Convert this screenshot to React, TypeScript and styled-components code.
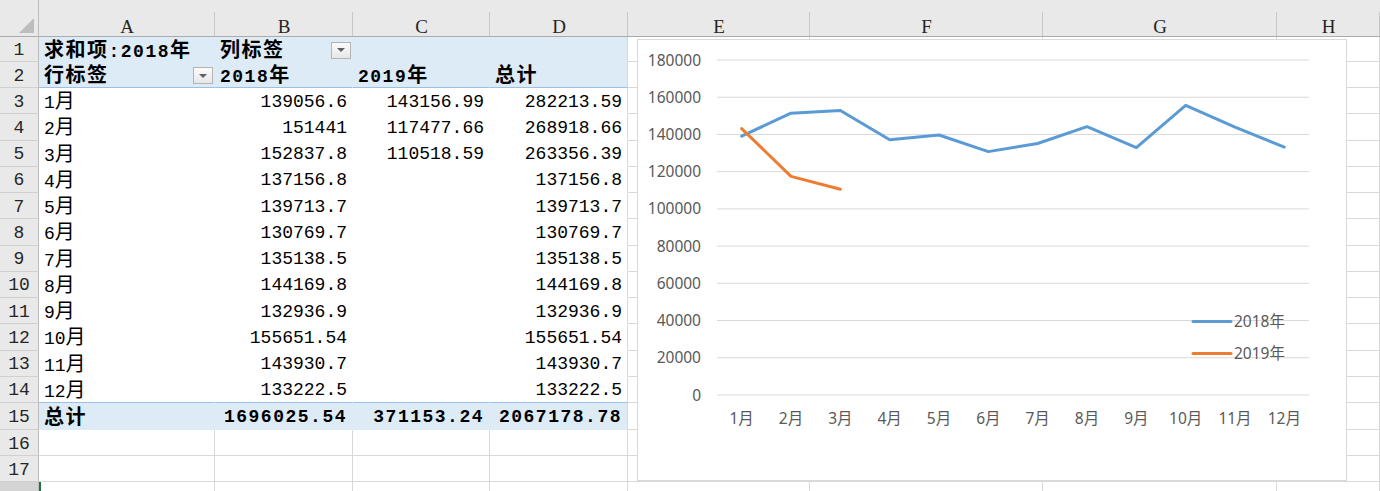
import React from 'react';
import styled, { createGlobalStyle } from 'styled-components';

const GRID = '#d9d9d9';
const PIVOT_BLUE = '#ddebf7';
const PIVOT_RULE = '#9bc2e6';

const GlobalStyle = createGlobalStyle`
  html, body {
    margin: 0;
    padding: 0;
    background: #fff;
    overflow: hidden;
  }
  body {
    font-family: "Liberation Mono", "Noto Sans CJK SC", monospace;
  }
`;

const COLS = ['A', 'B', 'C', 'D', 'E', 'F', 'G', 'H'];
const COL_WIDTHS = [39, 176, 138, 137, 138, 182, 233, 234, 103];

const Sheet = styled.div`
  position: relative;
  height: 491px;
  overflow: hidden;
  display: grid;
  grid-template-columns: ${COL_WIDTHS.map((w) => `${w}px`).join(' ')};
  grid-template-rows: 37px 25px 26px repeat(12, 26.25px) 27px 26px 26px 26px;
`;

const Corner = styled.div`
  box-sizing: border-box;
  background: #e9e9e9;
  border-right: 1px solid #bcbcbc;
  border-bottom: 1px solid #ababab;
  display: flex;
  align-items: flex-end;
  justify-content: flex-end;
  padding: 0 4px 3px 0;

  &::after {
    content: '';
    width: 0;
    height: 0;
    border-left: 15px solid transparent;
    border-bottom: 15px solid #bdbdbd;
  }
`;

const ColHead = styled.div`
  position: relative;
  box-sizing: border-box;
  background: #e9e9e9;
  border-bottom: 1px solid #ababab;
  display: flex;
  align-items: flex-end;
  justify-content: center;
  font-family: "Liberation Serif", serif;
  font-size: 19px;
  line-height: 19px;
  color: #262626;

  &::after {
    content: '';
    position: absolute;
    right: 0;
    top: 12px;
    bottom: 0;
    width: 1px;
    background: #c8c8c8;
  }
`;

const RowHead = styled.div<{ $active?: boolean }>`
  box-sizing: border-box;
  background: ${(p) => (p.$active ? '#d4d4d4' : '#e9e9e9')};
  border-right: 1px solid #bcbcbc;
  border-bottom: 1px solid #d0d0d0;
  display: flex;
  align-items: center;
  justify-content: center;
  padding-top: 2px;
  font-family: "Liberation Mono", monospace;
  font-size: 18px;
  color: #262626;
`;

type Fill = 'blue' | 'white';

const Cell = styled.div<{
  $fill?: Fill;
  $bold?: boolean;
  $right?: boolean;
  $rule?: boolean;
  $edge?: boolean;
  $selected?: boolean;
}>`
  box-sizing: border-box;
  display: flex;
  align-items: center;
  justify-content: ${(p) => (p.$right ? 'flex-end' : 'flex-start')};
  padding: 2px 5px 0 5px;
  white-space: nowrap;
  font-size: 18px;
  line-height: 1;
  color: #000;
  font-weight: ${(p) => (p.$bold ? 700 : 400)};
  letter-spacing: ${(p) => (p.$bold ? '1.5px' : '0')};
  background: ${(p) => (p.$fill === 'blue' ? PIVOT_BLUE : '#fff')};
  border-right: 1px solid
    ${(p) => (p.$fill && !p.$edge ? (p.$fill === 'blue' ? PIVOT_BLUE : '#fff') : GRID)};
  border-bottom: 1px solid
    ${(p) => (p.$rule ? PIVOT_RULE : p.$fill ? (p.$fill === 'blue' ? PIVOT_BLUE : '#fff') : GRID)};
  box-shadow: ${(p) => (p.$selected ? 'inset 2px 0 0 #217346' : 'none')};
`;

const Value = styled.span`
  display: inline-block;
  line-height: 18px;
`;

const Han = styled.span`
  font-family: "Noto Sans CJK SC", sans-serif;
  font-size: 20px;
  line-height: 18px;
`;

const Dropdown = styled.span`
  margin-left: auto;
  margin-right: -4px;
  flex: none;
  box-sizing: border-box;
  width: 20px;
  height: 17px;
  border: 1px solid #b4b4b4;
  background: linear-gradient(#fbfbfb, #e7e7e7);
  display: flex;
  align-items: center;
  justify-content: center;

  &::after {
    content: '';
    border-left: 4px solid transparent;
    border-right: 4px solid transparent;
    border-top: 4px solid #5f5f5f;
  }
`;

const HAN_RE = /([\u4e00-\u9fff]+)/;

const rich = (text: string) =>
  text
    .split(HAN_RE)
    .filter(Boolean)
    .map((part, i) =>
      HAN_RE.test(part) ? <Han key={i}>{part}</Han> : <React.Fragment key={i}>{part}</React.Fragment>
    );

type CellSpec = { t?: string; drop?: boolean };
type RowKind = 'head' | 'headLast' | 'body' | 'bodyLast' | 'total' | 'plain';
type RowSpec = { kind: RowKind; cells: CellSpec[] };

const months: [string, string, string, string][] = [
  ['1月', '139056.6', '143156.99', '282213.59'],
  ['2月', '151441', '117477.66', '268918.66'],
  ['3月', '152837.8', '110518.59', '263356.39'],
  ['4月', '137156.8', '', '137156.8'],
  ['5月', '139713.7', '', '139713.7'],
  ['6月', '130769.7', '', '130769.7'],
  ['7月', '135138.5', '', '135138.5'],
  ['8月', '144169.8', '', '144169.8'],
  ['9月', '132936.9', '', '132936.9'],
  ['10月', '155651.54', '', '155651.54'],
  ['11月', '143930.7', '', '143930.7'],
  ['12月', '133222.5', '', '133222.5'],
];

const ROWS: RowSpec[] = [
  { kind: 'head', cells: [{ t: '求和项:2018年' }, { t: '列标签', drop: true }, {}, {}] },
  { kind: 'headLast', cells: [{ t: '行标签', drop: true }, { t: '2018年' }, { t: '2019年' }, { t: '总计' }] },
  ...months.map((m, i) => ({
    kind: (i === months.length - 1 ? 'bodyLast' : 'body') as RowKind,
    cells: m.map((t) => ({ t })),
  })),
  { kind: 'total', cells: [{ t: '总计' }, { t: '1696025.54' }, { t: '371153.24' }, { t: '2067178.78' }] },
  { kind: 'plain', cells: [] },
  { kind: 'plain', cells: [] },
];

// chart geometry (svg coordinates)
const CW = 708;
const CH = 440;
const X0 = 79;
const X1 = 671;
const ZERO = 355;
const MAX = 180000;
const SCALE = 335 / MAX;
const STEP = (X1 - X0) / 12;
const cx = (i: number) => X0 + STEP / 2 + i * STEP;
const cy = (v: number) => ZERO - v * SCALE;

const s2018 = [139056.6, 151441, 152837.8, 137156.8, 139713.7, 130769.7, 135138.5, 144169.8, 132936.9, 155651.54, 143930.7, 133222.5];
const s2019 = [143156.99, 117477.66, 110518.59];
const ticks = Array.from({ length: 10 }, (_, i) => i * 20000);

const ChartBox = styled.div`
  position: absolute;
  left: 637px;
  top: 39px;
  width: 710px;
  height: 442px;
  box-sizing: border-box;
  border: 1px solid #d9d9d9;
  background: #fff;
`;

const ChartText = styled.text`
  font-family: "Noto Sans", "Noto Sans CJK SC", sans-serif;
  font-size: 15.5px;
  fill: #595959;
`;

const points = (data: number[]) => data.map((v, i) => `${cx(i)},${cy(v)}`).join(' ');

const LineChart: React.FC = () => (
  <ChartBox>
    <svg width={CW} height={CH} viewBox={`0 0 ${CW} ${CH}`}>
      {ticks.map((v) => (
        <g key={v}>
          <line x1={X0} x2={X1} y1={cy(v)} y2={cy(v)} stroke="#d9d9d9" strokeWidth={1} />
          <ChartText x={63} y={cy(v)} dy="0.36em" textAnchor="end">
            {v}
          </ChartText>
        </g>
      ))}
      {months.map((m, i) => (
        <ChartText key={m[0]} x={cx(i)} y={384} textAnchor="middle">
          {m[0]}
        </ChartText>
      ))}
      <polyline points={points(s2018)} fill="none" stroke="#5b9bd5" strokeWidth={3} strokeLinejoin="round" strokeLinecap="round" />
      <polyline points={points(s2019)} fill="none" stroke="#ed7d31" strokeWidth={3} strokeLinejoin="round" strokeLinecap="round" />
      <line x1={555} x2={593} y1={281.5} y2={281.5} stroke="#5b9bd5" strokeWidth={3} strokeLinecap="round" />
      <ChartText x={596} y={281.5} dy="0.36em">2018年</ChartText>
      <line x1={555} x2={593} y1={313.5} y2={313.5} stroke="#ed7d31" strokeWidth={3} strokeLinecap="round" />
      <ChartText x={596} y={313.5} dy="0.36em">2019年</ChartText>
    </svg>
  </ChartBox>
);

const renderPivotCell = (row: RowSpec, c: number, r: number) => {
  const spec = row.cells[c] || {};
  const { kind } = row;
  const fill: Fill = kind === 'head' || kind === 'headLast' || kind === 'total' ? 'blue' : 'white';
  const bold = kind === 'head' || kind === 'headLast' || kind === 'total';
  const right = c > 0 && (kind === 'body' || kind === 'bodyLast' || kind === 'total');
  return (
    <Cell
      key={`c${r}-${c}`}
      $fill={fill}
      $bold={bold}
      $right={right}
      $rule={kind === 'headLast' || kind === 'bodyLast'}
      $edge={c === 3}
    >
      {spec.t && <Value>{rich(spec.t)}</Value>}
      {spec.drop && <Dropdown />}
    </Cell>
  );
};

export default function App() {
  return (
    <>
      <GlobalStyle />
      <Sheet>
        <Corner />
        {COLS.map((c) => (
          <ColHead key={c}>{c}</ColHead>
        ))}
        {ROWS.map((row, r) => (
          <React.Fragment key={r}>
            <RowHead>{r + 1}</RowHead>
            {COLS.map((_, c) =>
              row.kind !== 'plain' && c < 4 ? (
                renderPivotCell(row, c, r)
              ) : (
                <Cell key={`c${r}-${c}`} />
              )
            )}
          </React.Fragment>
        ))}
        {/* row 18 only peeks in at the bottom edge */}
        <RowHead $active />
        {COLS.map((c, i) => (
          <Cell key={`r18-${c}`} $selected={i === 0} />
        ))}
        <LineChart />
      </Sheet>
    </>
  );
}
